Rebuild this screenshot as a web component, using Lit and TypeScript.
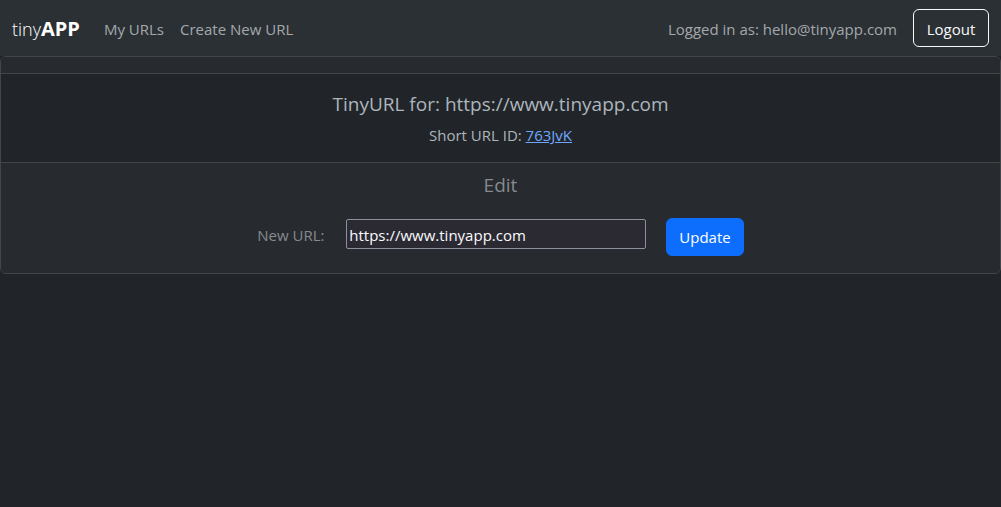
import { LitElement, html, css } from "lit";
import { customElement, state } from "lit/decorators.js";

@customElement("app-root")
export class AppRoot extends LitElement {
  @state() private email = "hello@tinyapp.com";
  @state() private shortId = "763JvK";
  @state() private longUrl = "https://www.tinyapp.com";

  static styles = css`
    :host {
      display: block;
      box-sizing: border-box;
      min-height: 100vh;
      background: #212529;
      color: #adb5bd;
      font: 15px/24px "Segoe UI", "Open Sans", "Noto Sans", sans-serif;
      --line: #424649;
    }
    * {
      box-sizing: border-box;
    }
    .navbar {
      display: flex;
      align-items: center;
      padding: 9px 12px;
      background: #2b3035;
    }
    .brand {
      margin-right: 24px;
      padding-top: 2px;
      color: #fff;
      font-size: 18px;
      line-height: 28px;
      font-weight: 300;
      text-decoration: none;
    }
    .brand b {
      font-size: 20px;
      font-weight: 700;
    }
    .links {
      display: flex;
      flex: 1;
      gap: 16px;
      padding-top: 2px;
    }
    .links a {
      color: #a4a8ab;
      text-decoration: none;
    }
    .user {
      margin-right: 16px;
      padding-top: 2px;
      color: #a4a8ab;
    }
    .btn {
      min-width: 76px;
      padding: 6px 12px;
      border: 1px solid #f8f9fa;
      border-radius: 6px;
      background: transparent;
      color: #f8f9fa;
      font: inherit;
      cursor: pointer;
    }
    .btn.outline {
      padding: 7px 12px 5px;
    }
    .btn.primary {
      border-color: #0d6efd;
      background: #0d6efd;
      color: #fff;
    }
    .card {
      border: 1px solid var(--line);
      border-radius: 6px;
      text-align: center;
      overflow: hidden;
    }
    .card-header {
      padding: 8px 16px;
      border-bottom: 1px solid var(--line);
      background: #272b2f;
    }
    .card-body {
      padding: 18px 16px 15px;
    }
    h5 {
      margin: 0 0 7px;
      font-size: 19px;
      line-height: 24px;
      font-weight: 400;
    }
    p {
      margin: 0;
    }
    p a {
      color: #6ea8fe;
    }
    .card-footer {
      padding: 10px 16px 17px;
      border-top: 1px solid var(--line);
      background: #272b2f;
      color: #868a8e;
    }
    form {
      display: flex;
      justify-content: center;
      align-items: center;
      gap: 20px;
      margin-top: 21px;
    }
    label {
      min-width: 69px;
      padding-bottom: 4px;
      text-align: left;
    }
    input {
      width: 300px;
      height: 30px;
      padding: 3px 2px 1px;
      margin-bottom: 6px;
      border: 1px solid #8f8f9d;
      border-radius: 2px;
      background: #2b2a33;
      color: #fbfbfe;
      font: inherit;
    }
  `;

  render() {
    return html`
      <nav class="navbar">
        <a class="brand" href="#">tiny<b>APP</b></a>
        <div class="links">
          <a href="#urls">My URLs</a>
          <a href="#new">Create New URL</a>
        </div>
        <span class="user">Logged in as: ${this.email}</span>
        <button class="btn outline" type="button">Logout</button>
      </nav>
      <main class="card">
        <div class="card-header"></div>
        <div class="card-body">
          <h5>TinyURL for: ${this.longUrl}</h5>
          <p>Short URL ID: <a href="#u">${this.shortId}</a></p>
        </div>
        <div class="card-footer">
          <h5>Edit</h5>
          <form @submit=${(e: Event) => e.preventDefault()}>
            <label for="long-url">New URL:</label>
            <input id="long-url" type="text" name="longURL" .value=${this.longUrl} />
            <button class="btn primary" type="submit">Update</button>
          </form>
        </div>
      </main>
    `;
  }
}
